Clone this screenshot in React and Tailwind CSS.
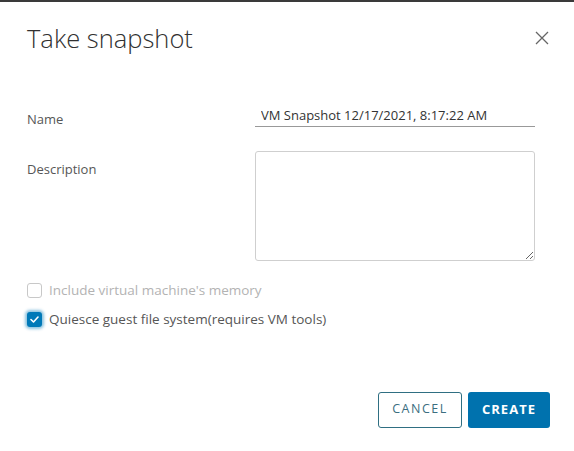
import React, { useState } from 'react';

const font = { fontFamily: '"Open Sans", "Liberation Sans", sans-serif' };

const CheckRow = ({ checked, disabled, label }) => (
  <label className="flex items-center gap-[7px] h-[15px]">
    {checked ? (
      <span className="flex items-center justify-center w-[15px] h-[15px] rounded-[3px] bg-[#0079b8] shadow-[0_0_3px_2px_rgba(0,121,184,0.45)]">
        <svg width="9" height="7" viewBox="0 0 9 7" fill="none">
          <path d="M1 3.5 L3.5 6 L8 1" stroke="#fff" strokeWidth="1.6" strokeLinecap="round" strokeLinejoin="round" />
        </svg>
      </span>
    ) : (
      <span className={`w-[15px] h-[15px] rounded-[3px] border ${disabled ? 'border-[#c8c8c8]' : 'border-[#666]'} bg-white`} />
    )}
    <span className={`text-[13.5px] ${disabled ? 'text-[#b3b3b3]' : 'text-[#565656]'}`}>{label}</span>
  </label>
);

export default function App() {
  const [name, setName] = useState('VM Snapshot 12/17/2021, 8:17:22 AM');

  return (
    <div className="w-[574px] h-[451px] bg-white border-t-2 border-[#3a3a3a] relative" style={font}>
      <div className="flex items-center justify-between pl-[27px] pr-[24px] pt-[21px]">
        <h1 className="text-[25.5px] font-light text-[#313131] leading-[30px]">Take snapshot</h1>
        <button className="w-[16px] h-[16px] flex items-center justify-center">
          <svg width="14" height="14" viewBox="0 0 14 14">
            <path d="M1 1 L13 13 M13 1 L1 13" stroke="#666" strokeWidth="1.3" />
          </svg>
        </button>
      </div>

      <div className="pl-[27px] pr-[39px] mt-[49px]">
        <div className="grid grid-cols-[228px_1fr] items-center">
          <span className="text-[13px] text-[#565656] mt-[8px]">Name</span>
          <input
            value={name}
            onChange={(e) => setName(e.target.value)}
            className="h-[23px] px-[6px] text-[13px] text-[#333] border-b border-[#999] outline-none"
            style={font}
          />
        </div>
        <div className="grid grid-cols-[228px_1fr] mt-[21px]">
          <span className="text-[13px] text-[#565656] mt-[9px]">Description</span>
          <textarea
            className="h-[110px] border border-[#cfcfcf] rounded-[3px] resize-y outline-none"
          />
        </div>

        <div className="flex flex-col gap-[14px] mt-[22px]">
          <CheckRow disabled label="Include virtual machine's memory" />
          <CheckRow checked label="Quiesce guest file system(requires VM tools)" />
        </div>
      </div>

      <div className="flex justify-end gap-[6px] pr-[24px] mt-[65px]">
        <button className="w-[84px] h-[36px] rounded-[3px] border border-[#2f6f82] text-[12.5px] tracking-[0.12em] text-[#3b6e80] bg-white">
          CANCEL
        </button>
        <button className="w-[82px] h-[36px] rounded-[3px] bg-[#0072ae] text-[13px] font-bold tracking-[0.08em] text-white">
          CREATE
        </button>
      </div>
    </div>
  );
}
